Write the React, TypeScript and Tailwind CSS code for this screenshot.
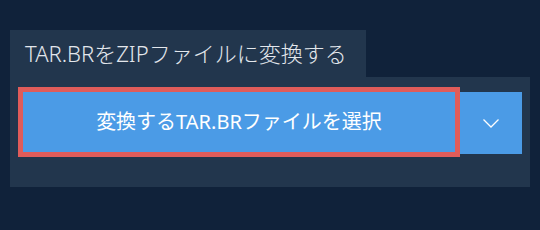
import React from 'react';

const font = { fontFamily: '"Noto Sans", "Noto Sans CJK JP", sans-serif' };

const Chevron = () => (
    <svg width="16" height="9" viewBox="0 0 16 9" fill="none">
        <path d="M0.5 0.5 L8 8 L15.5 0.5" stroke="white" strokeWidth="1.3" />
    </svg>
);

export default function App() {
    return (
        <div className="w-[540px] h-[230px] bg-[#10223a] pt-[30px] px-[10px]" style={font}>
            {/* tab */}
            <div className="w-[356px] h-[47px] bg-[#22364d] pl-[15px] flex items-center text-[22px] font-light text-[#e3e7ec]">
                TAR.BRをZIPファイルに変換する
            </div>
            {/* panel */}
            <div className="bg-[#22364d] h-[110px] pl-2 pr-2 pt-[10px] flex items-start">
                <button className="w-[442px] h-[70px] border-[5px] border-[#e05c5a] bg-[#4b9be6] text-white text-[20px] flex items-center justify-center">
                    変換するTAR.BRファイルを選択
                </button>
                <div className="mt-[5px] w-[62px] h-[62px] bg-[#4b9be6] flex items-center justify-center">
                    <Chevron />
                </div>
            </div>
        </div>
    );
}
